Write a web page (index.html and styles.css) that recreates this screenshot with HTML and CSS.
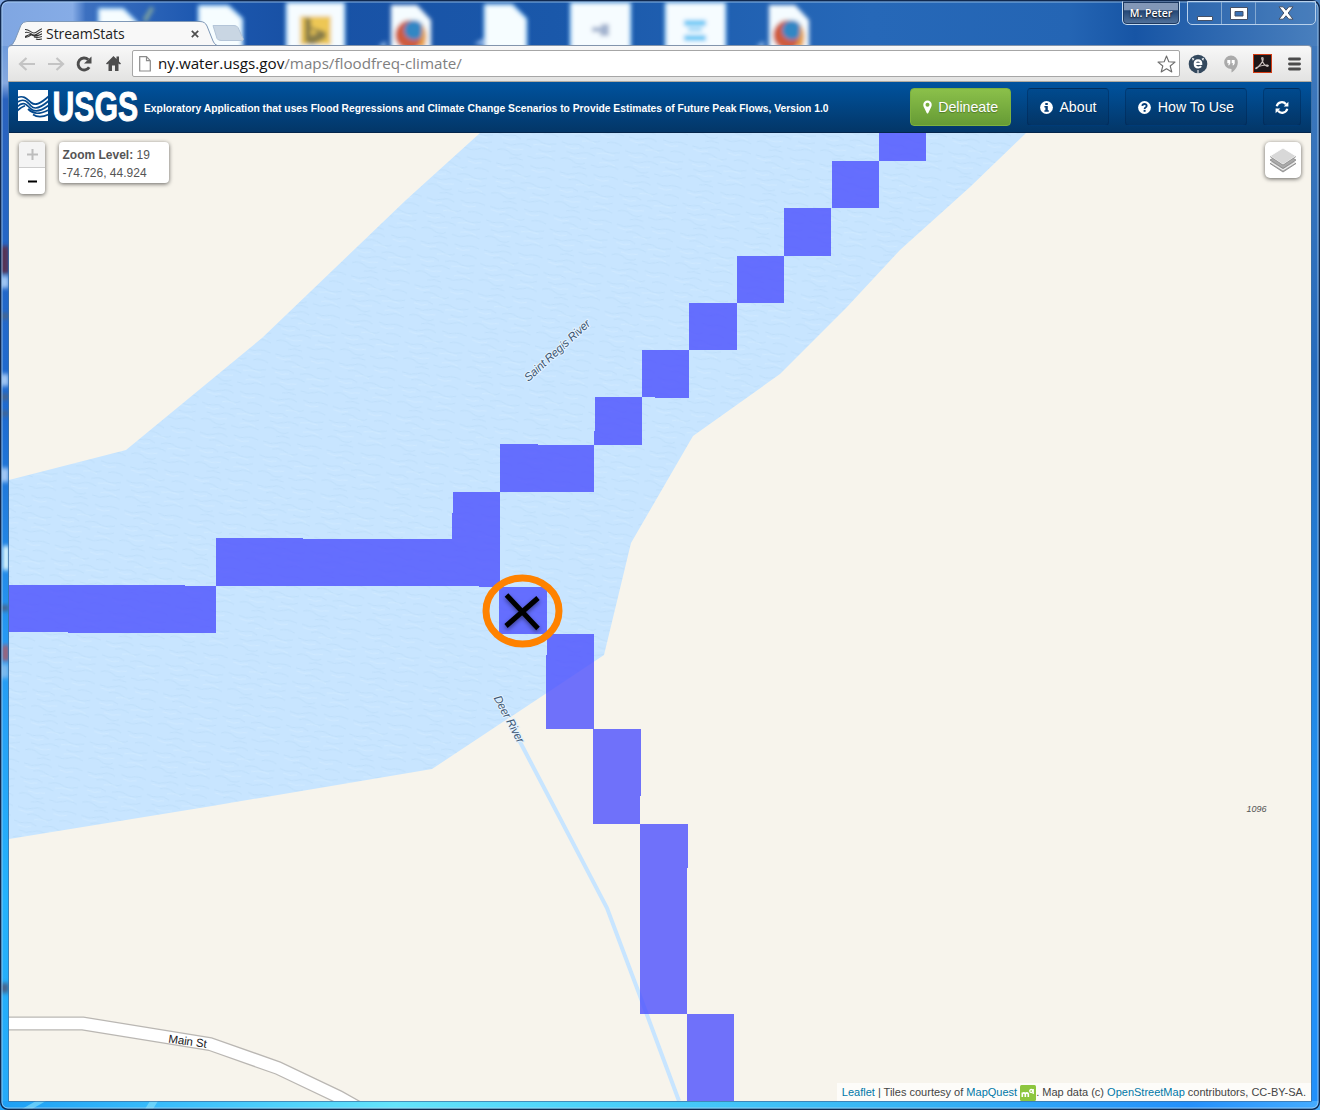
FILE: index.html
```html
<!DOCTYPE html>
<html lang="en">
<head>
<meta charset="utf-8">
<title>StreamStats</title>
<link rel="stylesheet" href="styles.css">
</head>
<body>
<div class="window">
  <svg class="wallpaper" width="1320" height="1110" viewBox="0 0 1320 1110" aria-hidden="true">
    <defs>
      <linearGradient id="glassTop" x1="0" x2="1" y1="0" y2="0">
        <stop offset="0" stop-color="#7fa6e2"/><stop offset=".055" stop-color="#86ace6"/><stop offset=".065" stop-color="#3c70c0"/><stop offset=".15" stop-color="#1d58b0"/><stop offset=".22" stop-color="#1851a5"/><stop offset=".42" stop-color="#1a58aa"/><stop offset=".66" stop-color="#2668b8"/><stop offset=".81" stop-color="#2465b4"/><stop offset=".86" stop-color="#1755a5"/><stop offset="1" stop-color="#4a80be"/>
      </linearGradient>
      <linearGradient id="glassLeft" x1="0" x2="0" y1="0" y2="1">
        <stop offset="0" stop-color="#6f9bdc"/><stop offset=".035" stop-color="#86a9df"/><stop offset=".05" stop-color="#2a62bd"/><stop offset=".35" stop-color="#1e6bd0"/><stop offset=".55" stop-color="#2698f2"/><stop offset=".8" stop-color="#24b2fc"/><stop offset="1" stop-color="#25a9f8"/>
      </linearGradient>
      <linearGradient id="glassRight" x1="0" x2="0" y1="0" y2="1">
        <stop offset="0" stop-color="#3f78bb"/><stop offset=".3" stop-color="#256bbd"/><stop offset=".7" stop-color="#2190f0"/><stop offset="1" stop-color="#2190fb"/>
      </linearGradient>
      <linearGradient id="glassBottom" x1="0" x2="1" y1="0" y2="0">
        <stop offset="0" stop-color="#1e9ff5"/><stop offset=".12" stop-color="#38bcfb"/><stop offset=".3" stop-color="#64e4fb"/><stop offset=".45" stop-color="#4bd2fa"/><stop offset=".7" stop-color="#35b2f4"/><stop offset=".9" stop-color="#2490fb"/><stop offset="1" stop-color="#45acff"/>
      </linearGradient>
      <filter id="soft" x="-30%" y="-30%" width="160%" height="160%"><feGaussianBlur stdDeviation="2"/></filter>
      <g id="fox"><path fill="#f5fcff" d="M-20-17H6L20-2V30H-20Z"/><circle cx="-1" cy="13" r="15" fill="#cf5b3d"/><circle cx="3" cy="8" r="10" fill="#3287c4"/><path fill="#e8a34a" d="M11 2q8 9 2 25l-6-3q5-9 4-22z"/><path fill="#8fb5e4" d="M-33 24l8-5v8z"/></g>
    </defs>
    <rect width="1320" height="46" fill="url(#glassTop)"/>
    <rect y="46" width="9" height="1064" fill="url(#glassLeft)"/>
    <rect x="1311" y="46" width="9" height="1064" fill="url(#glassRight)"/>
    <rect y="1101" width="1320" height="9" fill="url(#glassBottom)"/>
    <g filter="url(#soft)" fill="#6fb0ea" stroke="#6fb0ea" stroke-width="3" opacity=".8">
      <path d="M99 9h24l14 14v26H99zM199 6h29l14 13v30h-43zM485 5h27l14 14v30h-41zM287 3h57v46h-57zM571 3h59v46h-59zM666 3h59v46h-59z"/>
    </g>
    <g filter="url(#soft)">
      <path fill="#f6fdff" d="M99 9h24l14 14v26H99zM199 6h29l14 13v30h-43zM485 5h27l14 14v30h-41z"/>
      <path fill="#7ea2a0" d="M143 19l8-13 3 3-8 14z"/>
      <path fill="#f6fcff" d="M287 3h57v46h-57zM571 3h59v46h-59zM666 3h59v46h-59z"/>
      <rect x="300" y="16" width="31" height="29" fill="#edc754"/>
      <path fill="#887d4a" d="M305 17l6 2v8l15 5v6l-14 7-7-3z"/><path fill="#edc754" d="M311 29l7 3-7 4z"/>
      <path fill="#a3b3cf" d="M592 27h9v-3h8v12h-9v-4h-8z"/>
      <path fill="#62c7f5" d="M684 20h22v6h-22zM688 28h14v3h-14zM684 35h22v6h-22z"/>
      <use href="#fox" x="411" y="22"/><use href="#fox" x="789" y="22"/>
      <path fill="#93b8e8" d="M474 44l10-6v8z"/>
    </g>
    <g filter="url(#soft)">
      <path fill="#593052" d="M0 246h9v28H0z"/><path fill="#a2c7f4" d="M0 276h9v12H0zM0 374h9v12H0zM0 468h9v14H0z"/>
      <path fill="#47658c" d="M0 313h9v6H0zM0 394h9v6H0zM0 411h9v5H0zM0 605h9v6H0zM0 983h9v10H0z"/>
      <path fill="#eaffff" d="M3 546h6v24H3z"/><path fill="#a15f72" d="M2 645h7v16H2z"/><path fill="#7db9ee" d="M0 664h9v14H0z"/>
    </g>
    <path fill="#8de4fc" opacity=".6" d="M22 1109l14-8h10l-14 8zM145 1109l5-8h8l-5 8z"/>
    <rect x=".75" y=".75" width="1318.5" height="1108.5" rx="7" fill="none" stroke="#10294f" stroke-width="1.5"/>
    <rect x="2" y="2" width="1316" height="1106" rx="6" fill="none" stroke="#b5d7f5" stroke-opacity=".7"/>
    <path d="M8.500 82V1101.500H1311.500V82" fill="none" stroke="#3f6f9f" stroke-opacity=".7"/>
  </svg>

  <div class="titlebar">
    <div class="tabs">
      <svg class="tab-shape" width="246" height="26" viewBox="0 0 246 26" aria-hidden="true">
        <path d="M204 4.500h21q3 0 4 2l5 11q1 2-2 2h-20q-3 0-4-2z" fill="#c9d6e3" stroke="#b4c5d8"/>
        <path d="M0 25.500Q4 25 6 19L12 4Q14 .5 18 .5H191Q196 .5 198 5L204 20Q206 25.500 212 25.500V26H0Z" fill="#f8f8f8"/>
        <path d="M0 25Q4 24 6 19L12 4Q14 .5 18 .5H191Q196 .5 198 5L204 20Q206 25 212 25.500" fill="none" stroke="#7f98b7"/>
      </svg>
      <div class="tab-content">
        <svg width="17" height="12" viewBox="0 0 17 12" fill="none" stroke="#333" stroke-width="1.100"><path d="M0 1.500C4 1 6 5 9 5S13 2 17 .7M0 4.500C4 3 6 6.500 9 7S13 4.500 17 3.200M0 8.500C3 7.500 5 5.500 7 7 10 9.300 13 7.500 17 5.800M0 9.500q4-.3 6-2.500M9 9q3 1 8-.5M11 11q2 1 6 0"/></svg>
        <span class="tab-title">StreamStats</span>
        <svg class="tab-close" width="8" height="8" viewBox="0 0 8 8"><path d="M.8.8l6.400 6.400M7.200.8L.8 7.200" stroke="#4e4e4e" stroke-width="1.700"/></svg>
      </div>
    </div>
    <div class="caption">
      <div class="profile">M. Peter</div>
      <div class="controls">
        <span class="control"><svg width="18" height="16"><path d="M1.500 11.500h15v4h-15z" fill="#fff" stroke="#455066"/></svg></span>
        <span class="control"><svg width="18" height="15"><path fill-rule="evenodd" d="M.5 1.500h17v12H.5zM5 5.500v4.500h8V5.500z" fill="#fff" stroke="#455066"/></svg></span>
        <span class="control wide"><svg width="16" height="14"><path d="M1 .8h4.200L8 4.200 10.800.8H15L10.200 7l4.800 6.200h-4.200L8 9.800l-2.800 3.400H1L5.800 7z" fill="#fff" stroke="#455066"/></svg></span>
      </div>
    </div>
  </div>

  <div class="toolbar">
    <svg class="tool-nav" width="106" height="20" viewBox="0 0 106 20">
      <g fill="none" stroke="#c4c4c4" stroke-width="2.200"><path d="M17 10H3M8.500 4L2 10l6.500 6"/><path d="M30 10h14M38.500 4L45 10l-6.500 6"/></g>
      <path d="M71.200 13.200A6 6 0 1 1 70.200 5.600" fill="none" stroke="#4d4d4d" stroke-width="2.900"/><path d="M73.500 2.500v7h-7.500z" fill="#4d4d4d"/>
      <path fill="#4d4d4d" d="M95.500 2L103 9.500l-1 1-1.500-1V17H97v-5.500h-3V17h-3.500V9.500l-1.500 1-1-1zM98.500 2.500h2.500v5L98.500 5z"/>
    </svg>
    <div class="omnibox">
      <svg width="12" height="16" viewBox="0 0 12 16"><path d="M.7.700h6.800l3.800 4v10.300H.7zM7.500.7v4h3.800" fill="#fff" stroke="#8b8b8b" stroke-width="1.200"/></svg>
      <span class="url">ny.water.usgs.gov<span class="url-path">/maps/floodfreq-climate/</span></span>
      <svg class="star" width="19" height="18" viewBox="0 0 19 18"><path d="M9.500 1l2.300 5.700 6.200.4-4.800 3.900 1.600 6-5.300-3.300L4.200 17l1.600-6L1 7.100l6.200-.4z" fill="#fff" stroke="#6d6d6d" stroke-width="1.100" stroke-linejoin="round"/></svg>
    </div>
    <div class="extensions">
      <svg width="20" height="20" viewBox="0 0 20 20"><circle cx="10" cy="10" r="9.300" fill="#34495e"/><path fill="#fff" d="M4 3.800l2.500 1-1.700 2zM16 3.800l-2.500 1 1.700 2zM9.500 16h1v3.500h-1z"/><path d="M6.800 9.800h6.400Q13.200 6.300 10 6.300T6.800 9.800q0 3.700 3.300 3.700 2 0 3-1.300" fill="none" stroke="#fff" stroke-width="2.200"/></svg>
      <svg width="14" height="18" viewBox="0 0 14 18"><path fill="#aaa" d="M7 .5a6.800 6.800 0 0 0-6.800 6.800C.2 11 3.200 14 7.500 14v3.500C11 15.500 13.800 12 13.800 7.300A6.800 6.800 0 0 0 7 .5z"/><path fill="#fff" d="M3.300 5h3v3.500L5.200 10.300H4l.9-2H3.300zM7.700 5h3v3.500l-1.100 1.800H8.400l.9-2H7.700z"/></svg>
      <svg width="19" height="19" viewBox="0 0 19 19"><rect x=".5" y=".5" width="18" height="18" fill="#1e1718" stroke="#d33b14"/><path d="M8.600 4q2-1.200 1.400 2Q9 9.500 3.500 14.500q-1.500.5 0-1Q7 11.500 14.500 11q2 .8-.5 1.300Q10 11 8.600 4z" fill="none" stroke="#c9c0bd" stroke-width="1.200"/></svg>
      <svg width="13" height="14" viewBox="0 0 13 14"><path d="M1.500 2h10M1.500 7h10M1.500 12h10" stroke="#4b4b4b" stroke-width="2.900" stroke-linecap="round"/></svg>
    </div>
  </div>

  <header class="app-header">
    <svg class="logo" width="122" height="34" viewBox="0 0 122 34" fill="#fff">
      <path d="M0 1h30v31H0z"/>
      <g fill="none" stroke="#05498d" stroke-width="1.700"><path d="M-.5 8.500C6 6 9 10 13 13.500S22 15 30.500 7.500M-.5 13C6 9 9 12.500 13 17S23 18.500 30.500 12M-.5 17.500C5 12 8 15 12.500 19.500S23 22 30.500 16.500M-.5 21.500C3 18.500 4.500 17.500 7 16.800M10 20C16 25.500 21 25.500 30.500 21M15 25.500C20 29 25 28 30.500 25.500"/></g>
      <text class="logo-text" x="34.500" y="31.500" textLength="85.500" lengthAdjust="spacingAndGlyphs">USGS</text>
    </svg>
    <h1>Exploratory Application that uses Flood Regressions and Climate Change Scenarios to Provide Estimates of Future Peak Flows, Version 1.0</h1>
    <nav>
      <a class="btn primary"><svg width="9" height="14" viewBox="0 0 9 14"><path fill="#fff" fill-rule="evenodd" d="M4.500.5A4.200 4.200 0 0 0 .3 4.700c0 1.500.5 2.200 1 3.300l2.400 5q.8 1.200 1.600 0l2.400-5c.5-1.100 1-1.800 1-3.300A4.200 4.200 0 0 0 4.500.5zm0 2.300a2 2 0 1 1 0 4 2 2 0 0 1 0-4z"/></svg>Delineate</a>
      <a class="btn"><svg width="13" height="13" viewBox="0 0 13 13"><circle cx="6.500" cy="6.500" r="6.400" fill="#fff"/><path fill="#043c78" d="M5.300 2h2.500v2H5.300zM4.400 5h3.400v4.300h1v1.500H4.400V9.300h1V6.500h-1z"/></svg>About</a>
      <a class="btn"><svg width="13" height="13" viewBox="0 0 13 13"><circle cx="6.500" cy="6.500" r="6.400" fill="#fff"/><path d="M4.300 4.800Q4.500 3 6.500 3t2.200 1.800Q8.700 6 7.500 6.500q-.9.500-.9 1.600" fill="none" stroke="#043c78" stroke-width="1.800"/><path fill="#043c78" d="M5.600 8.900h2v1.900h-2z"/></svg>How To Use</a>
      <a class="btn icon-only"><svg width="14" height="13" viewBox="0 0 14 13"><path d="M1.700 5.200A5.300 5.300 0 0 1 11 3.200M12.300 7.800A5.300 5.300 0 0 1 3 9.800" fill="none" stroke="#fff" stroke-width="2.200"/><path fill="#fff" d="M13.400.8v4.700H8.700zM.6 12.200V7.500h4.700z"/></svg></a>
    </nav>
  </header>

  <main class="map">
    <svg class="tiles" width="1302" height="968" viewBox="9 133 1302 968">
      <defs>
        <pattern id="ripples" width="64" height="44" patternUnits="userSpaceOnUse" patternTransform="rotate(8)">
          <rect width="64" height="44" fill="#c8e5ff"/>
          <g fill="none" stroke="#b9daf6" stroke-width="1" stroke-opacity=".6"><path d="M2 4q8 3 15 0t13 1M36 2q7 3 12 1t13 1M12 11q8-3 14 1t12 0M45 13q7-3 15 1M0 18q7 3 12 1t11 2M29 21q9-3 14 0t16 0M6 27q8 3 14 0t15 1M42 29q7 3 17-1M1 35q7-3 13 1t12 0M32 37q8 3 14 0t14 1M14 42q7-3 14 0"/></g>
          <g fill="none" stroke="#d3ecff" stroke-width="1" stroke-opacity=".7"><path d="M3 7q8 3 15 0M38 6q7 3 14 0M20 15q8-3 14 1M4 22q8 3 14 0M36 25q9-3 18 0M10 31q8 3 17 0M40 34q8-3 16 1"/></g>
        </pattern>
      </defs>
      <rect x="9" y="133" width="1302" height="968" fill="#f7f4ec"/>
      <path fill="url(#ripples)" d="M480 133L406 200 262 338 126 450 9 480V839L212 806 432 769 604 655 631 543 693 436 780 374 847 307 900 250 970 187 1026 133Z"/>
      <path d="M518 738L607 908 640 996 679 1101" fill="none" stroke="#c8e5ff" stroke-width="4"/>
      <path d="M9 1023.500H83L210 1044 278 1068 339 1097 362 1110" fill="none" stroke="#bab7b3" stroke-width="14"/>
      <path d="M9 1023.500H83L210 1044 278 1068 339 1097 362 1110" fill="none" stroke="#fff" stroke-width="11.500"/>
      <path fill="#494efe" fill-opacity=".79" shape-rendering="crispEdges" d="M879 133h47v28h-47zM832 161h47v47h-47v-1zM784 208h47v48h-47zM737 256h47v47h-47zM689 303h48v47h-48zM642 350h47v48h-34v-1h-13zM595 397h47v48h-48v-14h1zM500 444h38v1h56v47h-94zM453 492h47v95h-21v-1H216v-48h87v1h149v-26h1zM9 585h176v1h31v47H68v-1H9zM499 587h48v47h-48zM547 634h47v95h-48v-74h1zM593 729h48v67h-1v28h-47zM640 824h48v44h-1v146h-47zM687 1014h47v87h-47z"/>
      <g class="water-label"><text transform="translate(528.500 382) rotate(-42.500)" textLength="85">Saint Regis River</text><text transform="translate(493.500 698) rotate(62)" textLength="52">Deer River</text></g>
      <text class="road-label" transform="translate(168 1042.500) rotate(8)" textLength="38.500">Main St</text>
      <text class="house-label" x="1246.500" y="812" textLength="20">1096</text>
      <ellipse cx="522.500" cy="611" rx="36.500" ry="33" fill="none" stroke="#ff8200" stroke-width="7"/>
      <path class="cross" d="M506.500 595L538 628.500M538 598L506 626" stroke="#000" stroke-width="5"/>
    </svg>
    <div class="map-top">
      <div class="zoom"><span class="zoom-btn off"><svg width="11" height="11"><path d="M5.500 0v11M0 5.500h11" stroke="#bdbdbd" stroke-width="2"/></svg></span><span class="zoom-btn"><svg width="9" height="3"><path d="M0 1.500h9" stroke="#000" stroke-width="2"/></svg></span></div>
      <div class="readout"><b>Zoom Level:</b> 19<br>-74.726, 44.924</div>
      <div class="layers"><svg width="26" height="26" viewBox="0 0 26 26"><path fill="#aaa" stroke="#858585" stroke-width=".8" d="M0 16.500l13-8 13 8-13 8.500z"/><path fill="#d0d0d0" stroke="#fff" stroke-width=".8" d="M0 15l13-8 13 8-13 8z"/><path fill="#aaa" stroke="#858585" stroke-width=".8" d="M0 13l13-8 13 8-13 8.500z"/><path fill="#d8d8d8" stroke="#fff" stroke-width=".9" d="M0 9L13 1l13 8-13 8.500z"/><path fill="none" stroke="#8a8a8a" stroke-width=".8" d="M0 9.500L13 18l13-8.500"/></svg></div>
    </div>
    <div class="attribution"><a>Leaflet</a> | Tiles courtesy of <a>MapQuest</a> <svg width="16" height="16" viewBox="0 0 16 16"><rect width="16" height="16" rx="1.500" fill="#8dc63f"/><path d="M2.300 12V7.500M2.300 9q1.700-2.200 3 0v3M5.300 9q1.700-2.200 3 0v3" fill="none" stroke="#fff" stroke-width="1.600"/><circle cx="11.200" cy="6" r="1.500" fill="none" stroke="#fff" stroke-width="1.300"/><path d="M13.200 4v5" stroke="#fff" stroke-width="1.300"/></svg>. Map data (c) <a>OpenStreetMap</a> contributors, CC-BY-SA.</div>
  </main>
</div>
</body>
</html>
```
FILE: styles.css
```css
* { box-sizing: border-box; }
body { margin: 0; font-family: "Liberation Sans", Arial, sans-serif; overflow: hidden; }
svg { display: block; flex: none; }

.window {
  position: relative;
  width: 1320px;
  height: 1110px;
  padding: 0 9px 9px;
  display: flex;
  flex-direction: column;
  background: #e8edf2;
}
.wallpaper { position: absolute; inset: 0; }
.titlebar, .toolbar, .app-header, .map { position: relative; flex: none; }

.titlebar { height: 45px; display: flex; justify-content: space-between; }
.tabs { display: grid; align-content: end; margin-bottom: -2px; }
.tab-shape, .tab-content { grid-area: 1 / 1; }
.tab-content { display: flex; align-items: center; width: 190px; padding-left: 16px; height: 25px; }
.tab-title { font: 14px/20px "Open Sans", sans-serif; color: #222; margin: 0 0 0 4px; flex: 1; letter-spacing: -.05px; }
.caption { display: flex; gap: 7px; align-items: flex-start; padding: 1px 1px 0 0; }
.profile {
  width: 58px; height: 24px; text-align: center; color: #fff;
  font: 600 10.5px/22px "Open Sans", sans-serif;
  border: 1px solid #c5dcf2; border-top-color: #53719c; border-radius: 0 0 5px 5px;
  background: linear-gradient(#8297b7 0 35%, #244776 40%, #54749d);
  box-shadow: inset 0 0 0 1px #1e3960;
  text-shadow: 0 1px 2px #000;
}
.controls {
  display: flex; width: 129px; height: 24px; margin-right: -6px;
  border: 1px solid #b8d1ec; border-radius: 0 0 5px 5px;
  background: rgba(70, 125, 185, .25);
}
.control { display: flex; justify-content: center; align-items: center; width: 34px; border-right: 1px solid #84a9d1; }
.control.wide { width: 59px; border: 0; }

.toolbar {
  height: 37px; margin: 0 -1px; padding: 0 10px 0 10px;
  display: flex; align-items: center;
  background: linear-gradient(#f8f8f8, #e3e3e2);
  border: solid #8294ac; border-width: 1px 1px 1px 0; border-bottom-color: #b0aba1;
  border-radius: 4px 4px 0 0;
}
.tool-nav { margin-right: 8px; }
.omnibox {
  width: 1048px; height: 27px; display: flex; align-items: center;
  padding: 0 3px 0 6px; background: #fff; border: 1px solid #a6a6a6; border-radius: 2px;
}
.url { flex: 1; margin: -1px 0 0 7px; font: 15.2px/22px "Open Sans", sans-serif; color: #111; white-space: nowrap; }
.url-path { color: #808080; }
.extensions { display: flex; align-items: center; flex: 1; justify-content: space-between; padding-left: 8px; }

.app-header {
  height: 51px; padding-left: 9px; padding-right: 10px;
  display: flex; align-items: center;
  background: linear-gradient(#00539f, #033667); border-bottom: 1px solid #04264c;
}
.logo { margin-top: -2px; overflow: visible; }
.logo-text { font: bold 42px "Liberation Sans", Arial, sans-serif; stroke: #fff; stroke-width: 1px; }
.app-header h1 {
  margin: 4px 0 0 4px; flex: 1; color: #fff; white-space: nowrap;
  font: bold 10.3px/16px "Liberation Sans", Arial, sans-serif;
}
nav { display: flex; gap: 16px; }
.btn {
  display: flex; align-items: center; justify-content: center; gap: 6.300px;
  height: 38px; padding: 0 12px; color: #fff; font-size: 14.200px; line-height: 20px; white-space: nowrap;
  border: 1px solid rgba(0, 25, 65, .3); border-radius: 4px;
  background: linear-gradient(#004a8e, #033566);
  text-shadow: 0 1px 1px rgba(0, 0, 0, .3);
}
.btn.primary { background: linear-gradient(#8bc04a, #669b35); border-color: #7db13f; }
.btn.icon-only { padding: 0 11px; }

.map { height: 968px; overflow: hidden; }
.tiles { position: absolute; inset: 0; }
.water-label { font: italic 11.500px "Liberation Sans", Arial, sans-serif; fill: #3c5570; stroke: #e3f2ff; stroke-width: 2px; paint-order: stroke; }
.road-label { font: 11.500px "Liberation Sans", Arial, sans-serif; fill: #222; }
.house-label { font: italic 9px "Liberation Sans", Arial, sans-serif; fill: #555; }
.cross { filter: drop-shadow(0 2px 2px rgba(0, 0, 0, .45)); }

.map-top { position: relative; display: flex; align-items: flex-start; padding: 9px 10px 0; }
.zoom, .readout, .layers { background: #fff; border-radius: 4px; box-shadow: 0 1px 4px rgba(0, 0, 0, .6); }
.zoom { width: 26px; overflow: hidden; }
.zoom-btn { display: flex; align-items: center; justify-content: center; height: 26px; }
.zoom-btn.off { background: #f4f4f4; border-bottom: 1px solid #ccc; }
.readout { margin-left: 14px; width: 110px; height: 41px; padding: 4px 3.500px; font-size: 12px; line-height: 18px; color: #555; white-space: nowrap; }
.layers { width: 36px; height: 36px; margin-left: auto; display: grid; place-items: center; border-radius: 5px; }
.attribution {
  position: absolute; right: 0; bottom: 0; height: 18px; padding: 0 5px;
  font-size: 11px; line-height: 18px; color: #444; white-space: nowrap; background: rgba(255, 255, 255, .7);
}
.attribution a { color: #0078a8; }
.attribution svg { display: inline-block; vertical-align: middle; margin-top: -1px; }
```
